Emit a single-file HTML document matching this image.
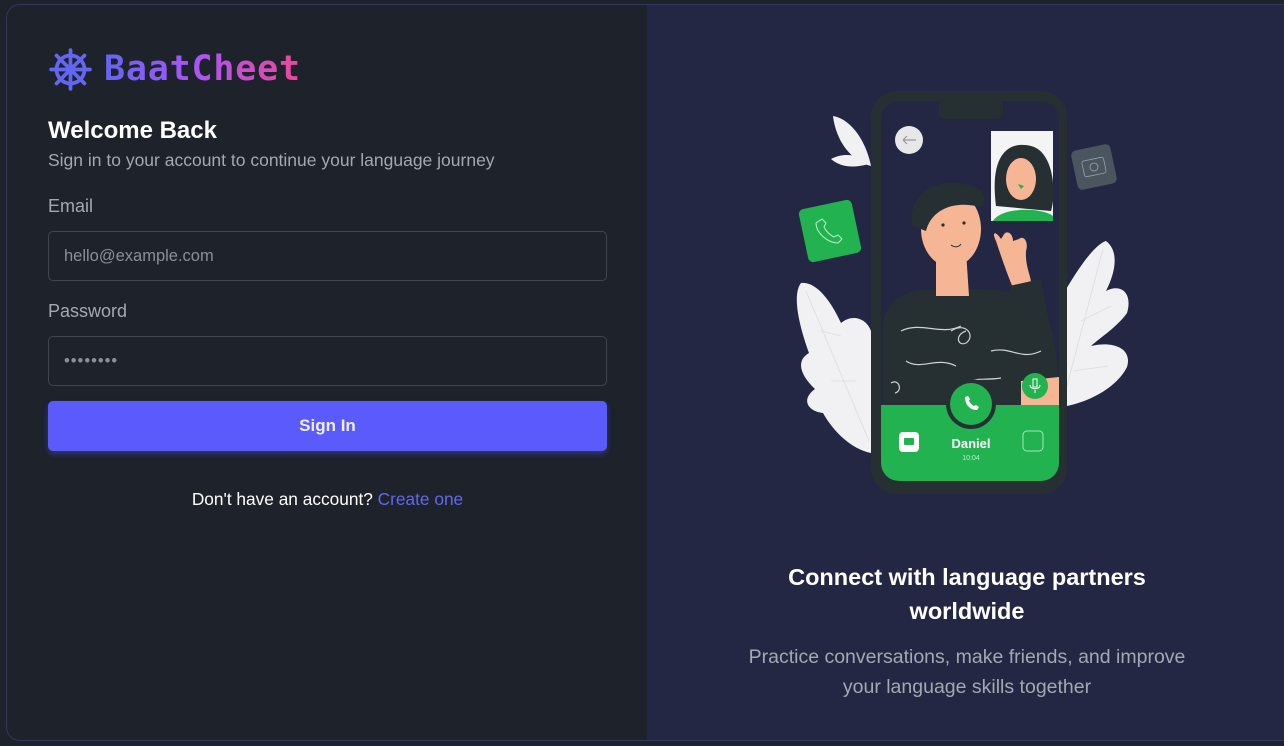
<!DOCTYPE html>
<html><head><meta charset="utf-8"><style>
*{margin:0;padding:0;box-sizing:border-box}
html,body{width:1284px;height:746px;background:#1d222b;overflow:hidden;font-family:"Liberation Sans",sans-serif}
.wrap{position:absolute;left:6px;top:4px;width:1290px;height:737px;border:1px solid #34375e;border-radius:14px;overflow:hidden;background:#1d222b}
.right{position:absolute;left:640px;top:0;width:650px;height:737px;background:#242744}
.abs{position:absolute}
.logo{left:97px;top:44px;font-family:"DejaVu Sans Mono",monospace;font-size:35px;font-weight:bold;letter-spacing:0.8px;background:linear-gradient(90deg,#6366f1,#a855f7 45%,#ec4899);-webkit-background-clip:text;background-clip:text;color:transparent}
h1{position:absolute;left:41px;top:112px;font-size:24px;font-weight:bold;color:#fff}
.sub{left:41px;top:145px;font-size:17.5px;color:#a3a8b3}
.lbl{font-size:18px;color:#a3a8b3;left:41px}
.inp{left:41px;width:559px;height:50px;border:1px solid #40454f;border-radius:5px;background:#1d222b;color:#8a8f99;font-size:16.5px;padding:15px 15px}
.btn{left:41px;top:396px;width:559px;height:50px;background:#5b5bfb;border-radius:5px;color:#eef;font-weight:bold;font-size:17px;text-align:center;line-height:50px;box-shadow:0 3px 6px rgba(91,91,251,.35)}
.foot{left:41px;width:559px;top:484px;text-align:center;color:#fff;font-size:17.3px}
.foot span{color:#6366f1}
.t1{left:640px;width:640px;top:555px;text-align:center;color:#fff;font-size:23.5px;font-weight:bold;line-height:34px}
.t2{left:640px;width:640px;top:637px;text-align:center;color:#a3a8b3;font-size:19.5px;line-height:30px}
</style></head><body>
<div class="wrap">
<div class="right"></div>
<svg class="abs" style="left:42px;top:43px" width="43" height="43" viewBox="0 0 40 40" fill="none" stroke="#6366f1" stroke-width="3.5">
<circle cx="20" cy="20" r="13"/><circle cx="20" cy="20" r="3" fill="#6366f1"/>
<path d="M20 2V38M2 20H38M7 7L33 33M33 7L7 33" stroke-linecap="round"/>
</svg>
<div class="abs logo">BaatCheet</div>
<h1>Welcome Back</h1>
<div class="abs sub">Sign in to your account to continue your language journey</div>
<div class="abs lbl" style="top:191px">Email</div>
<div class="abs inp" style="top:226px">hello@example.com</div>
<div class="abs lbl" style="top:296px">Password</div>
<div class="abs inp" style="top:331px;letter-spacing:1px">••••••••</div>
<div class="abs btn">Sign In</div>
<div class="abs foot">Don't have an account? <span>Create one</span></div>

<svg class="abs" style="left:774px;top:76px" width="360" height="420" viewBox="780 80 360 420">
<path d="M800 282 C815 280 830 300 840 322 C852 312 866 318 870 330 L870 452 C850 448 832 430 822 412 C806 410 800 398 814 388 C800 375 794 360 808 352 C800 330 790 295 800 282Z" fill="#f1f1f3"/>
<path d="M805 290 L868 440 M820 330 l20 5 M830 380 l25 0" stroke="#ddd" stroke-width="0.8" fill="none"/>
<path d="M1058 300 C1070 280 1090 245 1105 240 C1118 250 1115 270 1105 290 C1120 282 1132 292 1126 312 C1116 326 1100 336 1090 345 C1110 340 1132 346 1126 366 C1116 386 1090 400 1066 405 L1058 405Z" fill="#f1f1f3"/>
<path d="M1102 248 L1062 400 M1080 320 l30 -15 M1072 370 l35 -5" stroke="#ddd" stroke-width="0.8" fill="none"/>
<path d="M832 115 C850 118 865 140 870 165 C850 160 835 140 832 115Z" fill="#f1f1f3"/>
<path d="M830 158 C845 150 860 155 868 163 C850 168 838 165 830 158Z" fill="#f1f1f3"/>
<rect x="802" y="203" width="54" height="54" rx="5" fill="#22b24f" transform="rotate(-12 829 230)"/>
<path d="M815 222c0 10 12 20 22 20l4-4-4-4-4 2c-4-2-8-6-10-10l2-4-4-4z" fill="none" stroke="#bff0cc" stroke-width="1"/>
<rect x="1073" y="146" width="40" height="40" rx="5" fill="#4a5560" transform="rotate(-12 1093 166)"/>
<rect x="1082" y="158" width="22" height="16" rx="2" fill="none" stroke="#9aa3aa" stroke-width="0.8" transform="rotate(-12 1093 166)"/>
<circle cx="1093" cy="166" r="4" fill="none" stroke="#9aa3aa" stroke-width="0.8"/>
<rect x="870" y="90" width="196" height="403" rx="26" fill="#263032"/>
<rect x="880" y="100" width="178" height="380" rx="18" fill="#242744"/>
<rect x="938" y="98" width="64" height="20" rx="6" fill="#263032"/>
<circle cx="908" cy="139" r="14" fill="#e8e8ea"/>
<path d="M902 139H915M902 139l4-4M902 139l4 4" stroke="#999" stroke-width="1.2" fill="none"/>
<rect x="990" y="130" width="62" height="90" fill="#f4f4f4"/>
<path d="M995 205 C988 150 1010 140 1030 145 C1052 150 1056 190 1050 210Z" fill="#263032"/>
<ellipse cx="1020" cy="178" rx="15" ry="21" fill="#f6b595"/>
<path d="M1017 183l6 2-3 3z" fill="#22b24f"/>
<path d="M992 220 C1000 206 1040 206 1052 215 L1052 220Z" fill="#22b24f"/>
<path d="M882 404 L882 325 C885 290 920 285 950 290 C985 285 1010 290 1040 300 C1050 320 1058 350 1058 404Z" fill="#263032"/>
<path d="M935 250 L965 250 L968 295 L935 295Z" fill="#f6b595"/>
<ellipse cx="950" cy="228" rx="30" ry="38" fill="#f6b595"/>
<path d="M912 225 C905 190 940 175 970 185 C990 190 985 210 975 205 C950 200 930 210 925 230Z" fill="#263032"/>
<circle cx="942" cy="224" r="1.6" fill="#263032"/><circle cx="963" cy="222" r="1.6" fill="#263032"/>
<path d="M950 244c4 3 8 2 10-1" stroke="#263032" stroke-width="1" fill="none"/>
<path d="M995 240 C990 230 995 230 1000 238 L1002 235 C1005 228 1012 232 1012 240 L1018 238 C1022 234 1028 240 1025 250 C1024 265 1030 275 1030 282 L1012 287 C1005 270 1000 255 995 240Z" fill="#f6b595"/>
<path d="M1008 285 L1040 278 L1058 380 L1035 385Z" fill="#263032"/>
<path d="M900 330c20-10 40 5 60-5M905 360c15 10 30-5 50 5M950 330c15-10 25 5 15 12c-8 4-12-8 0-12M990 350c20-5 30 10 50 0M960 385c10-10 20-5 40-8M890 382c8-5 12 8 4 10" stroke="#cfd3d6" stroke-width="1.2" fill="none"/>
<path d="M1020 380 L1058 376 L1058 404 L1020 404Z" fill="#f6b595"/>
<path d="M880 404 H1058 V462 a18 18 0 0 1-18 18 H898 a18 18 0 0 1-18-18Z" fill="#22b24f"/>
<circle cx="970" cy="403" r="25" fill="#263032"/>
<circle cx="970" cy="403" r="21" fill="#22b24f"/>
<path d="M964 396c0 8 5 13 12 13l2-3-3-2-2 1c-2-1-4-3-5-5l1-2-2-3z" fill="#fff"/>
<circle cx="1034" cy="385" r="13" fill="#22b24f"/>
<path d="M1032 378h4v8h-4z M1029 384c0 5 10 5 10 0 M1034 389v3" stroke="#fff" stroke-width="1" fill="none"/>
<rect x="898" y="431" width="20" height="20" rx="4" fill="#fff"/>
<rect x="903" y="437" width="10" height="7" rx="1" fill="#22b24f"/>
<rect x="1022" y="430" width="20" height="20" rx="4" fill="none" stroke="#a7e8bb" stroke-width="1"/>
<text x="970" y="447" text-anchor="middle" fill="#fff" font-family="Liberation Sans" font-weight="bold" font-size="13">Daniel</text>
<text x="970" y="459" text-anchor="middle" fill="#bdeccc" font-family="Liberation Sans" font-size="7">10:04</text>
</svg>

<div class="abs t1">Connect with language partners<br>worldwide</div>
<div class="abs t2">Practice conversations, make friends, and improve<br>your language skills together</div>
</div>
</body></html>
